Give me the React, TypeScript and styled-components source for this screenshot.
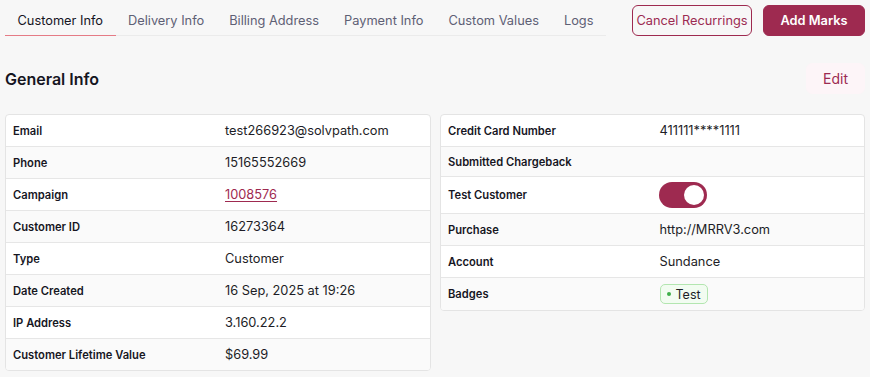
import React from "react";
import styled, { createGlobalStyle } from "styled-components";

const Global = createGlobalStyle`
  html, body { margin: 0; padding: 0; background: #f7f7f7; }
  body { font-family: Inter, "Noto Sans", "Liberation Sans", sans-serif; color: #1b1b28; }
  * { box-sizing: border-box; }
`;

const Page = styled.div`
  padding: 5px;
  width: 870px;
`;

const Header = styled.div`
  display: flex;
  justify-content: space-between;
  align-items: flex-start;
`;

const TabList = styled.div`
  display: flex;
  flex-shrink: 0;
  box-shadow: inset 0 -1px 0 #ebebeb;
`;

const Tab = styled.div<{ $active?: boolean }>`
  height: 31px;
  padding: 0 12.5px;
  display: flex;
  align-items: center;
  white-space: nowrap;
  font-size: 12.8px;
  color: ${(p) => (p.$active ? "#15151f" : "#5e6075")};
  border-bottom: 1px solid ${(p) => (p.$active ? "#e57b86" : "transparent")};
`;

const Actions = styled.div`
  display: flex;
  flex-shrink: 0;
  gap: 11px;
`;

const Button = styled.button<{ $variant: "outline" | "solid" | "soft"; $w: number }>`
  width: ${(p) => p.$w}px;
  height: 31px;
  padding: 0;
  border-radius: 6px;
  font-family: inherit;
  font-size: ${(p) => (p.$variant === "soft" ? "14px" : "12.8px")};
  white-space: nowrap;
  cursor: pointer;
  font-weight: ${(p) => (p.$variant === "solid" ? 600 : 400)};
  color: ${(p) => (p.$variant === "solid" ? "#ffffff" : "#9c2b52")};
  background: ${(p) => (p.$variant === "solid" ? "#9e2a50" : p.$variant === "soft" ? "#fdf5f8" : "transparent")};
  border: 1px solid ${(p) => (p.$variant === "soft" ? "#fdf5f8" : "#9e2a50")};
`;

const TitleRow = styled.div`
  display: flex;
  justify-content: space-between;
  align-items: center;
  margin-top: 27px;
`;

const Title = styled.h2`
  margin: 0;
  font-size: 16px;
  font-weight: 600;
  color: #15151f;
`;

const Grid = styled.div`
  display: grid;
  grid-template-columns: 426px 425px;
  gap: 9px;
  margin-top: 20px;
  align-items: start;
`;

const Table = styled.div`
  background: #ffffff;
  border: 1px solid #e4e4e4;
  border-radius: 4px;
  overflow: hidden;
`;

const Row = styled.div<{ $h: number }>`
  display: grid;
  grid-template-columns: 1fr 1fr;
  align-items: center;
  height: ${(p) => p.$h}px;
  padding: 0 7px;
  border-top: 1px solid #e6e6e6;
  &:first-child { border-top: none; height: ${(p) => p.$h - 1}px; }
  &:nth-child(even) { background: #fafafa; }
`;

const Label = styled.div`
  font-size: 11.2px;
  font-weight: 600;
  color: #16161f;
  white-space: nowrap;
`;

const Value = styled.div`
  font-size: 12.8px;
  color: #1d1d26;
  padding-left: 7px;
  white-space: nowrap;
`;

const Link = styled.a`
  color: #9e2a50;
  text-decoration: underline;
  text-underline-offset: 2px;
`;

const Toggle = styled.div`
  width: 48px;
  height: 26px;
  border-radius: 13px;
  background: #9e2a50;
  display: flex;
  align-items: center;
  justify-content: flex-end;
  padding: 0 3px;
  margin-left: -1px;
`;

const Knob = styled.div`
  width: 20px;
  height: 20px;
  border-radius: 50%;
  background: #fff;
`;

const Badge = styled.span`
  display: inline-flex;
  align-items: center;
  gap: 5px;
  height: 20px;
  padding: 0 6px;
  border-radius: 5px;
  border: 1px solid #b3e6b0;
  background: #f2fcf1;
  font-size: 12.5px;
  color: #1d1d26;
`;

const Dot = styled.span`
  width: 4px;
  height: 4px;
  border-radius: 50%;
  background: #3fae4a;
`;

type R = { label: string; value: React.ReactNode; h?: number };

const left: R[] = [
  { label: "Email", value: "test266923@solvpath.com" },
  { label: "Phone", value: "15165552669" },
  { label: "Campaign", value: <Link href="#">1008576</Link> },
  { label: "Customer ID", value: "16273364" },
  { label: "Type", value: "Customer" },
  { label: "Date Created", value: "16 Sep, 2025 at 19:26" },
  { label: "IP Address", value: "3.160.22.2" },
  { label: "Customer Lifetime Value", value: "$69.99" },
];

const right: R[] = [
  { label: "Credit Card Number", value: "411111****1111" },
  { label: "Submitted Chargeback", value: "", h: 30 },
  {
    label: "Test Customer",
    value: (
      <Toggle>
        <Knob />
      </Toggle>
    ),
    h: 37,
  },
  { label: "Purchase", value: "http://MRRV3.com" },
  { label: "Account", value: "Sundance" },
  {
    label: "Badges",
    value: (
      <Badge>
        <Dot />
        Test
      </Badge>
    ),
    h: 33,
  },
];

const tabs = ["Customer Info", "Delivery Info", "Billing Address", "Payment Info", "Custom Values", "Logs"];

const InfoTable = ({ rows }: { rows: R[] }) => (
  <Table>
    {rows.map((r) => (
      <Row key={r.label} $h={r.h ?? 32}>
        <Label>{r.label}</Label>
        <Value>{r.value}</Value>
      </Row>
    ))}
  </Table>
);

export default function App() {
  return (
    <>
      <Global />
      <Page>
        <Header>
          <TabList>
            {tabs.map((t, i) => (
              <Tab key={t} $active={i === 0}>
                {t}
              </Tab>
            ))}
          </TabList>
          <Actions>
            <Button $variant="outline" $w={120}>Cancel Recurrings</Button>
            <Button $variant="solid" $w={102}>Add Marks</Button>
          </Actions>
        </Header>
        <TitleRow>
          <Title>General Info</Title>
          <Button $variant="soft" $w={59}>Edit</Button>
        </TitleRow>
        <Grid>
          <InfoTable rows={left} />
          <InfoTable rows={right} />
        </Grid>
      </Page>
    </>
  );
}
